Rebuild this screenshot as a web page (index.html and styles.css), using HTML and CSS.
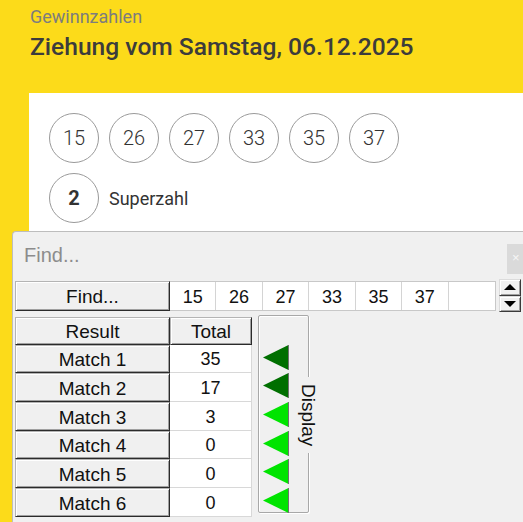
FILE: index.html
```html
<!DOCTYPE html>
<html lang="de">
<head>
<meta charset="utf-8">
<title>Gewinnzahlen</title>
<link rel="stylesheet" href="styles.css">
</head>
<body>
<div class="page">
  <header class="head">
    <p class="kicker">Gewinnzahlen</p>
    <h1 class="title">Ziehung vom Samstag, 06.12.2025</h1>
  </header>
  <section class="card">
    <div class="balls">
      <span class="ball">15</span>
      <span class="ball">26</span>
      <span class="ball">27</span>
      <span class="ball">33</span>
      <span class="ball">35</span>
      <span class="ball">37</span>
    </div>
    <div class="super">
      <span class="ball ball-super">2</span>
      <span class="super-label">Superzahl</span>
    </div>
  </section>
</div>

<div class="dialog">
  <div class="titlebar">
    <span class="dlg-title">Find...</span>
    <span class="close">×</span>
  </div>
  <div class="find-row">
    <div class="btn btn-find">Find...</div>
    <div class="nums">
      <span>15</span><span>26</span><span>27</span><span>33</span><span>35</span><span>37</span><span></span>
    </div>
    <div class="spin">
      <div class="spin-btn"><span class="arr-up"></span></div>
      <div class="spin-btn"><span class="arr-down"></span></div>
    </div>
  </div>
  <div class="results">
    <div class="table">
      <div class="btn">Result</div><div class="btn">Total</div>
      <div class="btn">Match 1</div><div class="cell">35</div>
      <div class="btn">Match 2</div><div class="cell">17</div>
      <div class="btn">Match 3</div><div class="cell">3</div>
      <div class="btn">Match 4</div><div class="cell">0</div>
      <div class="btn">Match 5</div><div class="cell">0</div>
      <div class="btn">Match 6</div><div class="cell">0</div>
    </div>
    <div class="group">
      <svg class="tri" width="26" height="25" viewBox="0 0 26 25"><polygon points="0,12.5 25.5,0 25.5,25" fill="#006f00"/><line x1="25.5" y1="0" x2="25.5" y2="25" stroke="#707070"/></svg>
      <svg class="tri" width="26" height="25" viewBox="0 0 26 25"><polygon points="0,12.5 25.5,0 25.5,25" fill="#006f00"/><line x1="25.5" y1="0" x2="25.5" y2="25" stroke="#707070"/></svg>
      <svg class="tri" width="26" height="25" viewBox="0 0 26 25"><polygon points="0,12.5 25.5,0 25.5,25" fill="#00e400"/><line x1="25.5" y1="0" x2="25.5" y2="25" stroke="#707070"/></svg>
      <svg class="tri" width="26" height="25" viewBox="0 0 26 25"><polygon points="0,12.5 25.5,0 25.5,25" fill="#00e400"/><line x1="25.5" y1="0" x2="25.5" y2="25" stroke="#707070"/></svg>
      <svg class="tri" width="26" height="25" viewBox="0 0 26 25"><polygon points="0,12.5 25.5,0 25.5,25" fill="#00e400"/><line x1="25.5" y1="0" x2="25.5" y2="25" stroke="#707070"/></svg>
      <svg class="tri" width="26" height="25" viewBox="0 0 26 25"><polygon points="0,12.5 25.5,0 25.5,25" fill="#00e400"/><line x1="25.5" y1="0" x2="25.5" y2="25" stroke="#707070"/></svg>
      <span class="legend">Display</span>
    </div>
  </div>
</div>
</body>
</html>
```

FILE: styles.css
```css
* { box-sizing: border-box; }

html, body { margin: 0; }

body {
  position: relative;
  width: 523px;
  height: 522px;
  overflow: hidden;
  background: #fcdb1a;
  font-family: Roboto, "Liberation Sans", sans-serif;
}

.page { padding-top: 6px; }

.head { padding-left: 30px; }

.kicker {
  margin: 0;
  font-size: 18px;
  line-height: 21px;
  color: #7d7d7d;
}

.title {
  margin: 6px 0 0;
  font-size: 24.6px;
  line-height: 28px;
  font-weight: 500;
  color: #3c3c3c;
}

.card {
  margin: 32px 0 0 29px;
  height: 429px;
  padding: 20px;
  background: #fff;
}

.balls { display: flex; gap: 10px; }

.ball {
  display: flex;
  align-items: center;
  justify-content: center;
  width: 50px;
  height: 50px;
  flex: none;
  border: 1px solid #9a9a9a;
  border-radius: 50%;
  font-size: 20px;
  font-weight: 300;
  color: #333;
}

.super {
  display: flex;
  align-items: center;
  gap: 10px;
  margin-top: 10px;
}

.ball-super { font-weight: 700; }

.super-label { font-size: 18px; color: #333; }

/* Find dialog window (overlays the page, cut by the viewport) */
.dialog {
  position: absolute;
  left: 12px;
  top: 231px;
  right: 0;
  bottom: 0;
  background: #f0f0f0;
  border: 1px solid #bdbdbd;
  border-right: 0;
  border-bottom: 0;
  border-radius: 4px 0 0 0;
  font-family: "Liberation Sans", Arial, sans-serif;
  color: #111;
}

.titlebar {
  position: relative;
  display: flex;
  align-items: center;
  height: 46px;
  padding-left: 11px;
}

.dlg-title { font-size: 20px; color: #8c8c8c; }

.close {
  position: absolute;
  left: 494px;
  top: 12px;
  width: 16px;
  height: 30px;
  padding: 4px 0 0 5px;
  background: #dadada;
  color: #f6f6f6;
  font-size: 13px;
  line-height: 20px;
}

.find-row {
  display: flex;
  height: 30px;
  margin-top: 3px;
  padding-left: 2px;
}

.btn {
  display: flex;
  align-items: center;
  justify-content: center;
  padding-top: 2px;
  background: #f0f0f0;
  border: 1px solid;
  border-color: #b4b4b4 #2b2b2b #2b2b2b #b4b4b4;
  box-shadow: inset 1px 1px #fff, inset -1px -1px #a0a0a0;
  font-size: 19px;
}

.btn-find { width: 155px; }

.nums {
  display: grid;
  grid-template-columns: repeat(7, 1fr);
  width: 326px;
  background: #fff;
  border: 1px solid #c8c8c8;
  border-left: 0;
}

.nums span {
  display: flex;
  align-items: center;
  justify-content: center;
  padding-top: 2px;
  border-right: 1px solid #d4d4d4;
  font-size: 18px;
}

.nums span:last-child { border-right: 0; }

.spin {
  display: flex;
  flex-direction: column;
  width: 22px;
  height: 33px;
  margin: -2px 0 0 3px;
}

.spin-btn {
  flex: 1;
  display: flex;
  align-items: center;
  justify-content: center;
  background: #f0f0f0;
  border: 1px solid;
  border-color: #dcdcdc #3a3a3a #3a3a3a #dcdcdc;
  box-shadow: inset 1px 1px #fff, inset -1px -1px #a0a0a0;
}

.arr-up, .arr-down {
  width: 0;
  height: 0;
  border-left: 6px solid transparent;
  border-right: 6px solid transparent;
}

.arr-up { border-bottom: 6px solid #000; }
.arr-down { border-top: 6px solid #000; }

.results {
  display: flex;
  align-items: flex-start;
  margin-top: 6px;
  padding-left: 2px;
}

.table {
  display: grid;
  grid-template-columns: 155px 82px;
  grid-template-rows: 28px 28px 29px 29px 28px 29px 29px;
}

.cell {
  display: flex;
  align-items: center;
  justify-content: center;
  padding-top: 2px;
  background: #fff;
  border-right: 1px solid #d8d8d8;
  border-bottom: 1px solid #d8d8d8;
  font-size: 18px;
}

.group {
  position: relative;
  display: grid;
  grid-template-rows: 28px 29px 29px 28px 29px 29px;
  width: 51px;
  height: 198px;
  margin: -2px 0 0 6px;
  padding: 29px 0 0 4px;
  border: 1px solid #a8a8a8;
  border-radius: 2px;
  box-shadow: inset 1px 1px #fff, 1px 1px #fff;
}

.tri { display: block; }

.legend {
  position: absolute;
  right: -10px;
  top: 61px;
  width: 20px;
  padding: 7px 0;
  background: #f0f0f0;
  writing-mode: vertical-rl;
  font-size: 19px;
  line-height: 20px;
}
```
